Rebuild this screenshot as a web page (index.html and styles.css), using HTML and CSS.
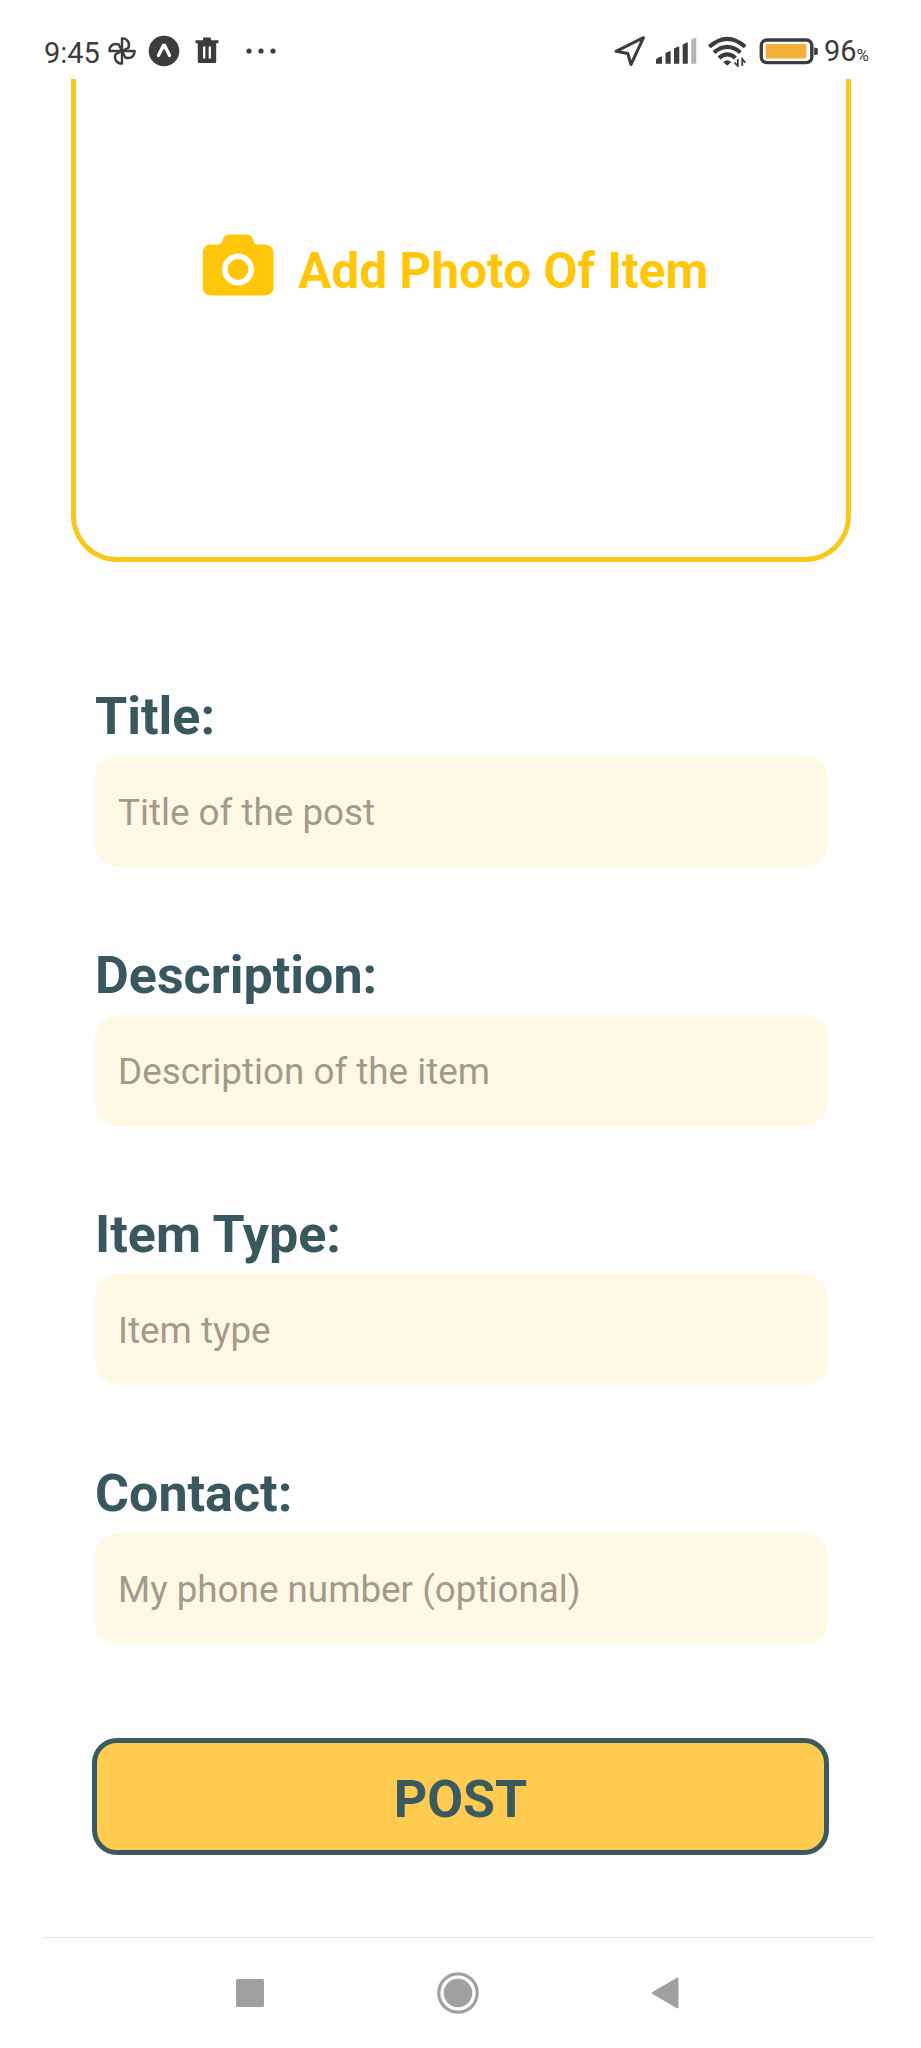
FILE: index.html
```html
<!DOCTYPE html>
<html lang="en">
<head>
<meta charset="utf-8">
<title>New post</title>
<link rel="stylesheet" href="styles.css">
</head>
<body>
<div class="screen">
  <header class="status">
    <div class="status-left">
      <span class="clock">9:45</span>
      <svg class="icon fan" width="32" height="32" viewBox="-16 -16 32 32" fill="none" stroke="#3c3c3c" stroke-width="2.4" stroke-linejoin="round">
        <path id="petal" d="M0 0V-12.6C5.5-12.6 8.2-8.2 6.5-3.3L0 0Z"/>
        <use href="#petal" transform="rotate(90)"/>
        <use href="#petal" transform="rotate(180)"/>
        <use href="#petal" transform="rotate(270)"/>
      </svg>
      <svg class="icon expo" width="32" height="32" viewBox="-16 -16 32 32">
        <circle r="15.3" fill="#3c3c3c"/>
        <path d="M-1.6-7.2H1.7C3.4-3.5 5.2.2 7.1 3.8 7.5 5.6 5.6 7.1 4.3 5.6 2.7 2.8 1.5-.2 0-2.5-1.6 0-2.7 2.8-4.3 5.6-5.7 7.1-7.5 5.6-7.1 3.8-5.2.2-3.4-3.5-1.6-7.2Z" fill="#fff"/>
      </svg>
      <svg class="icon trash" width="24" height="28" viewBox="0 0 24 28">
        <path d="M.5 3.3H8V1.2Q8 .6 8.6.6h6.600Q16 .6 16 1.200V3.300h7.500v3H21.200V24.500Q21.200 26 19.700 26H4.300Q2.800 26 2.800 24.500V6.300H.5Z" fill="#3c3c3c"/>
        <path d="M9.200 9.500v12M14.800 9.500v12" stroke="#fff" stroke-width="2.300"/>
      </svg>
      <svg class="icon dots" width="30" height="8" viewBox="0 0 30 8" fill="#3c3c3c">
        <circle cx="3" cy="4" r="2.600"/><circle cx="15" cy="4" r="2.600"/><circle cx="27" cy="4" r="2.600"/>
      </svg>
    </div>
    <div class="status-right">
      <svg class="icon" width="34" height="34" viewBox="614 35 34 34" fill="none" stroke="#3c3c3c" stroke-width="3" stroke-linejoin="round">
        <path d="M644.500 38.700L632 65.500 628.800 54.500 617 52.300Z"/>
      </svg>
      <svg class="icon signal" width="42" height="28" viewBox="656 38 42 28" fill="#3c3c3c">
        <path d="M657 64.800V61Q657.500 58.500 663 57.500V64.800ZM666.500 64.800V54.500Q667 53 671.700 52V64.800ZM675 64.800V50Q675.500 48.500 680.300 47.500V64.800ZM683.700 64.800V46Q684.200 44.500 688.800 43.500V64.800Z"/>
        <path d="M692.200 64.800V41Q692.700 39.500 697.300 38.700V64.800Z" fill="#b5b5b5"/>
      </svg>
      <svg class="icon wifi" width="40" height="32" viewBox="708 35 40 32" fill="none" stroke="#3c3c3c">
        <path d="M710.300 46.800Q728.200 30.800 746.200 46.800M715 52.600Q728.200 41.300 741.500 52.600M720 58Q728.200 50.900 736.500 58" stroke-width="4"/>
        <path d="M724.300 62Q728.200 58.300 732.200 62L728.200 65.800Z" fill="#3c3c3c" stroke="none"/>
        <path d="M738.800 59V66L735.600 62.600M743.300 66V59L746.400 62.800" stroke-width="1.800"/>
      </svg>
      <svg class="icon battery" width="60" height="28" viewBox="760 37 60 28">
        <rect x="762.300" y="40" width="50.500" height="22.600" rx="5.500" fill="none" stroke="#3c3c3c" stroke-width="3.400"/>
        <rect x="766.700" y="44" width="40.600" height="14.500" rx="1.500" fill="#f5ae38"/>
        <path d="M815.200 47.500Q818.800 47.500 818.800 49V53.500Q818.800 55 815.200 55Z" fill="#3c3c3c"/>
      </svg>
      <span class="charge">96<span class="percent">%</span></span>
    </div>
  </header>

  <main class="content">
    <section class="photo">
      <svg class="camera" width="72" height="64" viewBox="0 0 72 64">
        <path d="M9 11.500H16Q19.500 11.500 20.500 7.500 21.500 1.500 27.500 1.500H44.500Q50 1.500 51.500 7.500 52.500 11.500 55.500 11.500H62Q71.500 11.500 71.500 20.500V54Q71.500 62.500 62 62.500H9Q.800 62.500.800 54V20.500Q.800 11.500 9 11.500Z" fill="#ffc60a"/>
        <circle cx="36" cy="36.500" r="13.200" fill="none" stroke="#fff" stroke-width="5.600"/>
      </svg>
      <span class="photo-text">Add Photo Of Item</span>
    </section>

    <form class="form">
      <div class="field"><label class="label" for="title">Title:</label><input class="input" id="title" placeholder="Title of the post"></div>
      <div class="field"><label class="label" for="description">Description:</label><input class="input" id="description" placeholder="Description of the item"></div>
      <div class="field"><label class="label" for="type">Item Type:</label><input class="input" id="type" placeholder="Item type"></div>
      <div class="field"><label class="label" for="contact">Contact:</label><input class="input" id="contact" placeholder="My phone number (optional)"></div>
      <button class="post" type="button">POST</button>
    </form>
  </main>

  <nav class="nav">
    <svg width="28" height="28" viewBox="0 0 28 28"><rect width="28" height="28" rx="1.500" fill="#a0a0a0"/></svg>
    <svg width="42" height="42" viewBox="-21 -21 42 42"><circle r="19.200" fill="none" stroke="#a0a0a0" stroke-width="3.200"/><circle r="14.300" fill="#a0a0a0"/></svg>
    <svg width="28" height="32" viewBox="0 0 28 32"><path d="M1.500 16L26.500 1.500V30.500Z" fill="#a0a0a0" stroke="#a0a0a0" stroke-width="2" stroke-linejoin="round"/></svg>
  </nav>
</div>
</body>
</html>
```
FILE: styles.css
```css
* { box-sizing: border-box; }
body { margin: 0; background: #fefefe; font-family: Roboto, "Liberation Sans", sans-serif; }
svg { display: block; flex: none; }
.screen { width: 921px; height: 2048px; display: flex; flex-direction: column; overflow: hidden; }
.status { height: 79px; padding: 23px 50px 0 44px; display: flex; justify-content: space-between; color: #3c3c3c; }
.status-left, .status-right { height: 56px; display: flex; align-items: center; }
.clock, .charge { font-size: 29px; line-height: 56px; padding-top: 3px; white-space: nowrap; }
.clock { width: 62px; }
.expo { margin-left: 10px; }
.trash { margin-left: 15px; }
.dots { margin-left: 27px; }
.signal { margin-left: 8px; }
.wifi { margin-left: 10px; }
.battery { margin-left: 12px; }
.charge { width: 47px; margin-left: 5px; padding-top: 4px; }
.percent { font-size: 17px; }

.content { padding: 0 70px 0 71px; }
.photo { height: 483px; border: 5px solid #f7c71c; border-top: 0; border-radius: 0 0 46px 46px; display: flex; align-items: flex-start; padding: 154px 0 0 126px; }
.photo-text { margin-left: 24px; padding-top: 2px; font-size: 49.500px; font-weight: 700; line-height: 72px; color: #ffc60a; white-space: nowrap; }
.form { padding: 124px 22px 0 21px; }
.field { height: 259px; padding: 0 1px 0 3px; display: flex; flex-direction: column; }
.label { height: 70px; padding-top: 1px; font-size: 52px; font-weight: 700; line-height: 60px; color: #38575f; }
.input { height: 111px; width: 100%; flex: none; border: 0; border-radius: 23px; background: #fff8e5; padding: 2px 23px 0; font: 400 36.800px Roboto, "Liberation Sans", sans-serif; color: #a39a89; }
.input::placeholder { color: #a39a89; opacity: 1; }
.post { display: block; width: 737px; height: 117px; margin-top: 16px; border: 5px solid #3b5a60; border-radius: 25px; background: #ffcb51; color: #3b5a60; font: 700 52px/1 Roboto, "Liberation Sans", sans-serif; padding: 6px 0 0; }

.nav { height: 111px; margin: auto 47px 0 43px; border-top: 1px solid #e0e0e0; padding: 0 195px 0 193px; display: flex; align-items: center; justify-content: space-between; }
```
